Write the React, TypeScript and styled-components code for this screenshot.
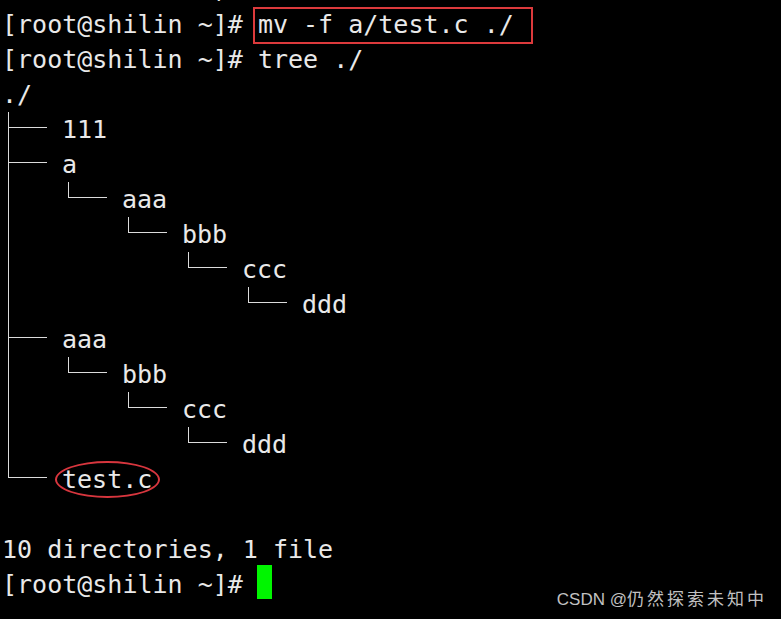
import React from "react";
import styled, { createGlobalStyle } from "styled-components";

const Global = createGlobalStyle`
  html, body {
    margin: 0;
    padding: 0;
    background: #000;
    height: 100%;
  }
  #root {
    min-height: 100%;
    background: #000;
  }
`;

const Screen = styled.div`
  position: relative;
  width: 781px;
  height: 619px;
  overflow: hidden;
  background: #000;
`;

const Terminal = styled.div`
  margin-top: -28px;
  padding-left: 2px;
  font-family: "DejaVu Sans Mono", "Liberation Mono", monospace;
  font-size: 25px;
  line-height: 35px;
  color: #e9e9e9;
  white-space: pre;
`;

const Line = styled.div`
  display: flex;
  height: 35px;
`;

type GuideKind = "pipe" | "tee" | "elbow" | "blank";

const LINE = "#dcdcdc";

const guideBg: Record<GuideKind, string> = {
  pipe: `linear-gradient(${LINE}, ${LINE}) 6px 0 / 1px 100% no-repeat`,
  tee: `linear-gradient(${LINE}, ${LINE}) 6px 0 / 1px 100% no-repeat, linear-gradient(${LINE}, ${LINE}) 6px 15px / 39px 1px no-repeat`,
  elbow: `linear-gradient(${LINE}, ${LINE}) 6px 0 / 1px 16px no-repeat, linear-gradient(${LINE}, ${LINE}) 6px 15px / 39px 1px no-repeat`,
  blank: "none",
};

const Guide = styled.span<{ $kind: GuideKind }>`
  flex: 0 0 60px;
  width: 60px;
  height: 35px;
  background: ${(p) => guideBg[p.$kind]};
`;

const CommandBox = styled.span`
  align-self: flex-start;
  box-sizing: border-box;
  height: 37px;
  margin-left: -5px;
  padding: 0 17px 0 3px;
  border: 2px solid #dc3a3c;
  line-height: 31px;
`;

const Circled = styled.span`
  align-self: flex-start;
  box-sizing: border-box;
  width: 105px;
  height: 37px;
  margin-left: -7px;
  margin-top: -1px;
  padding-left: 5px;
  border: 2px solid #d8363e;
  border-radius: 50%;
  line-height: 33px;
`;

const Cursor = styled.span`
  align-self: flex-start;
  width: 15px;
  height: 34px;
  margin-top: -2px;
  margin-left: -1px;
  background: #00f500;
`;

const Watermark = styled.div`
  position: absolute;
  right: 14px;
  bottom: 9px;
  font-family: "Liberation Sans", "Noto Sans CJK SC", sans-serif;
  font-size: 17px;
  line-height: 20px;
  color: #c2c2c2;
  white-space: nowrap;
`;

const Cjk = styled.span`
  letter-spacing: 3px;
`;

const PROMPT = "[root@shilin ~]# ";

type Node = { guides: GuideKind[]; name: string; circled?: boolean };

const tree: Node[] = [
  { guides: ["tee"], name: "111" },
  { guides: ["tee"], name: "a" },
  { guides: ["pipe", "elbow"], name: "aaa" },
  { guides: ["pipe", "blank", "elbow"], name: "bbb" },
  { guides: ["pipe", "blank", "blank", "elbow"], name: "ccc" },
  { guides: ["pipe", "blank", "blank", "blank", "elbow"], name: "ddd" },
  { guides: ["tee"], name: "aaa" },
  { guides: ["pipe", "elbow"], name: "bbb" },
  { guides: ["pipe", "blank", "elbow"], name: "ccc" },
  { guides: ["pipe", "blank", "blank", "elbow"], name: "ddd" },
  { guides: ["elbow"], name: "test.c", circled: true },
];

export default function App() {
  return (
    <Screen>
      <Global />
      <Terminal>
        <Line>{"              ,"}</Line>
        <Line>
          {PROMPT}
          <CommandBox>mv -f a/test.c ./</CommandBox>
        </Line>
        <Line>{PROMPT}tree ./</Line>
        <Line>./</Line>
        {tree.map((n, i) => (
          <Line key={i}>
            {n.guides.map((g, j) => (
              <Guide key={j} $kind={g} />
            ))}
            {n.circled ? <Circled>{n.name}</Circled> : n.name}
          </Line>
        ))}
        <Line />
        <Line>10 directories, 1 file</Line>
        <Line>
          {PROMPT}
          <Cursor />
        </Line>
      </Terminal>
      <Watermark>
        CSDN @<Cjk>仍然探索未知中</Cjk>
      </Watermark>
    </Screen>
  );
}
